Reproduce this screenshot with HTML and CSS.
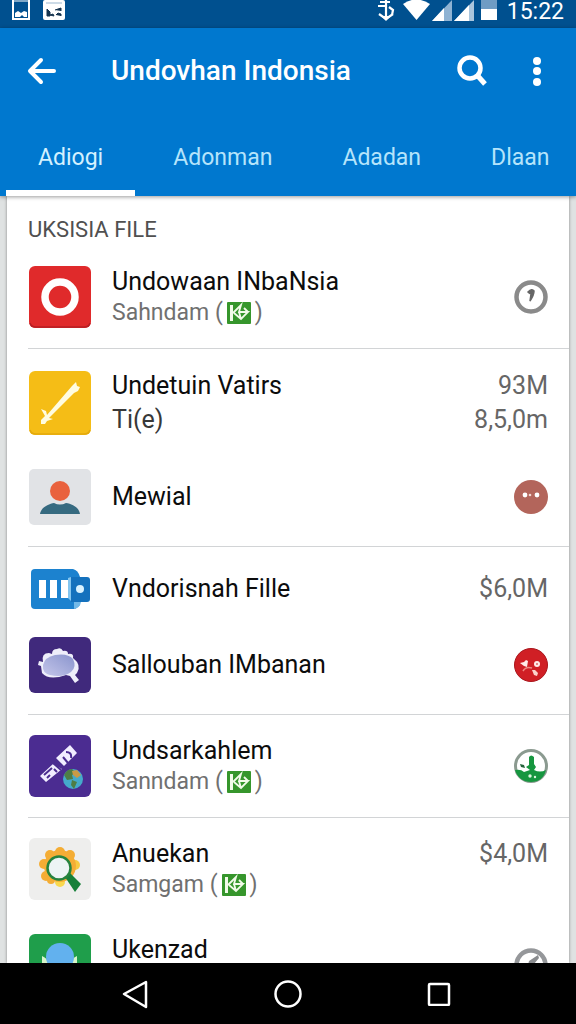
FILE: index.html
```html
<!DOCTYPE html>
<html lang="id">
<head>
    <meta charset="UTF-8">
    <meta name="viewport" content="width=device-width, initial-scale=1.0">
    <title>Undovhan Indonsia</title>
    <link rel="stylesheet" href="styles.css">
</head>
<body>
    <!-- K badge used next to the subtitles -->
    <svg class="defs" width="0" height="0" aria-hidden="true">
        <symbol id="badge" viewBox="0 0 24 22">
            <rect width="24" height="22" rx="1" fill="#36962c"/>
            <path d="M3 3h3v16H3z" fill="#f2fbe9"/>
            <path d="M6 11l8-8-2 7 9 0-7 7-7-6M12 10l2 7M17 6l4 4" fill="none" stroke="#f2fbe9" stroke-width="1.800"/>
        </symbol>
    </svg>

    <div class="status-bar">
        <svg width="18" height="20" viewBox="0 0 18 20">
            <path d="M1 0v19h16V0" fill="none" stroke="#fff" stroke-width="2"/>
            <path d="M1 1h16" stroke="#fff"/>
            <path d="M3 17v-4l3-2 3 2 3-2 3 1v5h-3l-2-2-2 2z" fill="#fff"/>
        </svg>
        <svg class="status-picture" width="22" height="20" viewBox="0 0 22 20">
            <rect width="22" height="20" rx="2" fill="#fff"/>
            <path d="M3 3h16" stroke="#9ab7cf"/>
            <path d="M4 9l3 3v4H4zM7 15l3-1 1 2zM12 10l6-2v3M13 15l2-2 3 1v2" fill="#16344f" stroke="#16344f"/>
        </svg>
        <div class="status-right">
            <svg width="18" height="22" viewBox="0 0 18 22">
                <path d="M9 0v17M3 2h10M1 6h7M2 14l7 5 7-5M12 7l4 3-1 5" fill="none" stroke="#fff" stroke-width="2.200"/>
                <path d="M4 16h10l-5 5z" fill="#fff"/>
            </svg>
            <svg class="wifi" width="27" height="20" viewBox="0 0 27 20">
                <path d="M0 4Q13-5 27 4L13.500 20z" fill="#fff"/>
            </svg>
            <svg width="20" height="21" viewBox="0 0 20 21">
                <path d="M20 0v21H0z" fill="#8fb3d3"/>
                <path d="M12 8v13H0z" fill="#fff"/>
            </svg>
            <svg width="20" height="21" viewBox="0 0 20 21">
                <path d="M20 0v21H0z" fill="#a9c5dd"/>
                <path d="M15 5v16H0z" fill="#fff"/>
            </svg>
            <svg class="battery" width="16" height="20" viewBox="0 0 16 20">
                <path d="M0 0h16v10H0z" fill="#6f9cc4"/>
                <path d="M0 9h16v11H0z" fill="#fff"/>
            </svg>
            <span class="clock">15:22</span>
        </div>
    </div>

    <header>
        <div class="app-bar">
            <button type="button" aria-label="Back">
                <svg width="30" height="28" viewBox="0 0 30 28">
                    <path d="M14 3L3 14l11 11M4 14h23" fill="none" stroke="#fff" stroke-width="4" stroke-linecap="round" stroke-linejoin="round"/>
                </svg>
            </button>
            <h1>Undovhan Indonsia</h1>
            <button type="button" aria-label="Search">
                <svg width="32" height="32" viewBox="0 0 32 32">
                    <circle cx="14" cy="13" r="10.500" fill="none" stroke="#fff" stroke-width="4.500"/>
                    <path d="M21 20l8 9" stroke="#fff" stroke-width="5"/>
                </svg>
            </button>
            <button type="button" class="more" aria-label="More options">
                <svg width="8" height="30" viewBox="0 0 8 30">
                    <circle cx="4" cy="5" r="4" fill="#fff"/>
                    <circle cx="4" cy="15" r="4" fill="#fff"/>
                    <circle cx="4" cy="26" r="4" fill="#fff"/>
                </svg>
            </button>
        </div>
        <nav class="tabs">
            <a href="#" class="active">Adiogi</a>
            <a href="#">Adonman</a>
            <a href="#">Adadan</a>
            <a href="#">Dlaan</a>
        </nav>
    </header>

    <main>
        <h2>UKSISIA FILE</h2>

        <ul>
            <li class="row">
                <svg width="62" height="62" viewBox="0 0 62 62">
                    <rect width="62" height="62" rx="6" fill="#e02a2b"/>
                    <path d="M1 57q1 4 6 4h48q5 0 6-4" fill="none" stroke="#b71f24" stroke-width="1.500"/>
                    <circle cx="31" cy="31" r="15" fill="none" stroke="#fff" stroke-width="7.500"/>
                </svg>
                <div class="text">
                    <p class="title">Undowaan INbaNsia</p>
                    <p class="sub">Sahndam ( <svg width="24" height="22"><use href="#badge"/></svg>)</p>
                </div>
                <svg width="34" height="34" viewBox="0 0 34 34">
                    <circle cx="17" cy="17" r="14.500" fill="#fff" stroke="#8a8a8a" stroke-width="4.500"/>
                    <path d="M14 12q4-4 6-1 0 4-4 10l1-7-2-1z" fill="#666" stroke="#666" stroke-width="1.500"/>
                </svg>
            </li>
        </ul>

        <ul>
            <li class="row">
                <svg width="62" height="64" viewBox="0 0 62 64">
                    <rect width="62" height="64" rx="6" fill="#f5bd16"/>
                    <path d="M1 59q1 4 6 4h48q5 0 6-4" fill="none" stroke="#e3a90d" stroke-width="1.500"/>
                    <path d="M43 15l4-4 1 4 3 1-2 4-4 2-25 25 4 1-6 2-2 3-4 0 0-4 4-4-4-7 5 2 1 4z" fill="#fffce0"/>
                </svg>
                <div class="text two-line">
                    <p class="title">Undetuin Vatirs</p>
                    <p class="second">Ti(e)</p>
                </div>
                <div class="amount two-line">
                    <p>93M</p>
                    <p>8,5,0m</p>
                </div>
            </li>
            <li class="row short">
                <svg width="62" height="56" viewBox="0 0 62 56">
                    <rect width="62" height="56" rx="5" fill="#e1e3e6"/>
                    <path d="M11 45c1-7 9-10 14-11q6 3 12 0c6 1 13 4 14 11z" fill="#366a80"/>
                    <circle cx="31" cy="22" r="10" fill="#e9623e"/>
                </svg>
                <p class="text title">Mewial</p>
                <svg width="34" height="34" viewBox="0 0 34 34">
                    <circle cx="17" cy="17" r="17" fill="#b3655b"/>
                    <circle cx="11" cy="15" r="2.400" fill="#fff"/>
                    <circle cx="16" cy="15" r="1.300" fill="#f3d9d4"/>
                    <circle cx="23" cy="15" r="2.400" fill="#fff"/>
                </svg>
            </li>
        </ul>

        <ul>
            <li class="row short">
                <svg width="62" height="60" viewBox="0 0 62 60">
                    <path d="M6 10h38q5 1 7 8v28l-5 4H6q-4 0-4-4V14q0-4 4-4z" fill="#1c82cf"/>
                    <path d="M45 43h7q-1 6-7 7z" fill="#72b9e8"/>
                    <path d="M42 18h16q3 0 3 3v19q0 3-3 3H42z" fill="#1471bd"/>
                    <path d="M10 21h7v18h-7zM21 21h7v18h-7zM32 21h7v18h-7z" fill="#fff"/>
                    <path d="M39 19l3-1v24l-3-3z" fill="#83c5ef"/>
                    <circle cx="51" cy="30" r="4" fill="#d9f2ff"/>
                </svg>
                <p class="text title">Vndorisnah Fille</p>
                <p class="amount">$6,0M</p>
            </li>
            <li class="row short">
                <svg width="62" height="56" viewBox="0 0 62 56">
                    <defs>
                        <linearGradient id="cloud" x1="0" y1="1" x2="1" y2="0">
                            <stop offset="0" stop-color="#c5c6ea"/>
                            <stop offset="1" stop-color="#8994cd"/>
                        </linearGradient>
                    </defs>
                    <rect width="62" height="56" rx="6" fill="#40297c"/>
                    <path d="M14 25q-2-9 6-9l3 1q0-5 5-5 4-2 6 2 5-1 5 3 6-1 5 4 9 7 4 15l-2 2 4 5-4 3-5-7-4-1q-17 6-24-2l-1-7-3-1 1-4z" fill="#eeeefa"/>
                    <path d="M14 28q2-8 12-10 13-2 18 4 4 8-2 13-8 6-21 3-8-2-7-10z" fill="url(#cloud)"/>
                </svg>
                <p class="text title">Sallouban IMbanan</p>
                <svg width="34" height="34" viewBox="0 0 34 34">
                    <circle cx="17" cy="17" r="16.500" fill="#d01f25" stroke="#a9161c"/>
                    <path d="M6 15l4-1 2-2 2 1-1 6-3-1z" fill="#ffece8"/>
                    <circle cx="23" cy="16" r="3" fill="#ffece8"/>
                    <circle cx="23" cy="16" r="1" fill="#d66"/>
                    <path d="M9 23q3-5 9-3" fill="none" stroke="#ee8880" stroke-width="1.500"/>
                    <path d="M18 22l3 0 3 3-1 3-3-1z" fill="#fbd3cc"/>
                </svg>
            </li>
        </ul>

        <ul>
            <li class="row">
                <svg width="62" height="62" viewBox="0 0 62 62">
                    <rect width="62" height="62" rx="6" fill="#4b2c91"/>
                    <path d="M11 41l13-12 9 5-16 13zM27 23L41 10l7 8-13 13z" fill="#f1edff"/>
                    <path d="M15 40l8-7M18 43l3-3M25 34l3 3M34 22l5 6M37 17q6 0 5 6M24 28l8 7" stroke="#4b2c91" stroke-width="2" fill="none"/>
                    <circle cx="44" cy="44" r="10" fill="#45aacb"/>
                    <path d="M35 40q3-6 8-6l4 4-4 2 1 4-6 1zM43 45l5 2-3 7-3-4z" fill="#4e7d45"/>
                    <path d="M43 36l5-1 4 5-4 3-4-3z" fill="#c99a46"/>
                </svg>
                <div class="text">
                    <p class="title">Undsarkahlem</p>
                    <p class="sub">Sanndam ( <svg width="24" height="22"><use href="#badge"/></svg>)</p>
                </div>
                <svg width="34" height="34" viewBox="0 0 34 34">
                    <circle cx="17" cy="17" r="15.500" fill="#fff" stroke="#8b9a90" stroke-width="3"/>
                    <path d="M1 21q6-1 9 2l6-2-4-3 3-2V8q2-3 5 0v7l2 3-2 3q6 3 12 0-3 12-15 12Q5 33 1 21z" fill="#16963f"/>
                    <path d="M6 15l4 1 1 3-4-1z" fill="#23633a"/>
                    <circle cx="16" cy="27" r="1.700" fill="#dff5df"/>
                    <circle cx="21" cy="28" r="1.200" fill="#dff5df"/>
                </svg>
            </li>
        </ul>

        <ul class="open">
            <li class="row">
                <svg width="62" height="62" viewBox="0 0 62 62">
                    <rect width="62" height="62" rx="6" fill="#eeeeed"/>
                    <g fill="#f4ad35">
                        <circle cx="31" cy="14" r="5"/>
                        <circle cx="21" cy="17" r="5"/>
                        <circle cx="41" cy="17" r="5"/>
                        <circle cx="15" cy="26" r="5"/>
                        <circle cx="46" cy="27" r="5" fill="#f8ca43"/>
                        <circle cx="17" cy="38" r="5"/>
                        <circle cx="31" cy="44" r="5" fill="#f9d84d"/>
                        <circle cx="22" cy="42" r="4"/>
                        <circle cx="31" cy="28" r="16"/>
                    </g>
                    <path d="M36 39l5-4 11 11-6 8z" fill="#168039"/>
                    <circle cx="30" cy="30" r="11.500" fill="#edf4f5" stroke="#26833e" stroke-width="2.500"/>
                </svg>
                <div class="text">
                    <p class="title">Anuekan</p>
                    <p class="sub">Samgam (<svg width="24" height="22"><use href="#badge"/></svg>)</p>
                </div>
                <p class="amount top">$4,0M</p>
            </li>
            <li class="row last">
                <svg width="62" height="62" viewBox="0 0 62 62">
                    <rect width="62" height="62" rx="6" fill="#1f9e4b"/>
                    <path d="M13 22q7 3 9 12h17q2-9 9-12v30H13z" fill="#d8f5c9"/>
                    <circle cx="31" cy="23" r="14" fill="#62b1ee"/>
                </svg>
                <p class="text title">Ukenzad</p>
                <svg width="34" height="34" viewBox="0 0 34 34">
                    <circle cx="17" cy="17" r="14.500" fill="#fff" stroke="#95979a" stroke-width="4.500"/>
                    <path d="M13 21l2-8 9-6 1 3-5 6-5 7z" fill="#8a8c8f"/>
                </svg>
            </li>
        </ul>
    </main>

    <footer>
        <button type="button" aria-label="Back">
            <svg width="28" height="30" viewBox="0 0 28 30">
                <path d="M25 3v25L3 15z" fill="none" stroke="#fff" stroke-width="2.500" stroke-linejoin="round"/>
            </svg>
        </button>
        <button type="button" aria-label="Home">
            <svg width="28" height="28" viewBox="0 0 28 28">
                <circle cx="14" cy="14" r="12.500" fill="none" stroke="#fff" stroke-width="2.500"/>
            </svg>
        </button>
        <button type="button" aria-label="Recent apps">
            <svg width="24" height="24" viewBox="0 0 24 24">
                <rect x="2" y="2" width="20" height="21" rx="1" fill="none" stroke="#fff" stroke-width="2.500"/>
            </svg>
        </button>
    </footer>
</body>
</html>
```
FILE: styles.css
```css
* {
    box-sizing: border-box;
}

body {
    display: flex;
    flex-direction: column;
    height: 100vh;
    margin: 0;
    overflow: hidden;
    font-family: Roboto, "Liberation Sans", sans-serif;
    background-color: #dfe2e2;
    color: #0c0c0c;
}

h1, h2, p, ul {
    margin: 0;
    padding: 0;
}

svg {
    display: block;
    flex: none;
}

button {
    display: flex;
    padding: 0;
    border: none;
    background: none;
    cursor: pointer;
}

.defs {
    position: absolute;
}

/* Status bar */
.status-bar {
    display: flex;
    flex: none;
    height: 28px;
    padding: 0 12px;
    background-color: #00508f;
    color: white;
}

.status-picture {
    margin-left: 13px;
}

.status-right {
    display: flex;
    gap: 2px;
    margin-left: auto;
}

.wifi {
    margin-left: 6px;
}

.battery {
    margin: 0 8px 0 5px;
}

.clock {
    font-size: 23px;
    line-height: 28px;
    height: 28px;
    margin-top: -2px;
}

/* Header */
header {
    flex: none;
    background-color: #0078cf;
    color: white;
    box-shadow: 0 1px 4px rgba(0, 0, 0, 0.4);
    z-index: 1;
}

.app-bar {
    display: flex;
    align-items: center;
    height: 86px;
    padding: 0 35px 0 27px;
}

h1 {
    flex: 1;
    margin-left: 54px;
    font-size: 28px;
    font-weight: 500;
    line-height: 32px;
}

.more {
    margin-left: 45px;
}

.tabs {
    display: flex;
    gap: 6px;
    height: 82px;
    padding-left: 6px;
    overflow: hidden;
}

.tabs a {
    flex: none;
    padding: 29px 32px 0;
    border-bottom: 6px solid transparent;
    font-size: 23px;
    line-height: 30px;
    color: #b5e4fb;
    text-decoration: none;
}

.tabs .active {
    border-color: white;
    color: #d3f1ff;
}

/* List */
main {
    flex: 1;
    min-height: 0;
    margin: 0 7px;
    padding-left: 21px;
    overflow: hidden;
    background-color: white;
    box-shadow: 0 0 3px rgba(0, 0, 0, 0.4);
}

h2 {
    padding: 20px 0 2px;
    font-size: 22px;
    font-weight: 400;
    line-height: 28px;
    color: #505050;
}

ul {
    list-style: none;
    border-bottom: 1px solid #d2d4d6;
}

ul:has(.short) {
    padding-bottom: 15px;
}

ul.open {
    border-bottom: none;
}

.row {
    display: flex;
    align-items: center;
    gap: 21px;
    padding: 20px 21px 20px 1px;
}

.row.short {
    padding-top: 12px;
    padding-bottom: 6px;
}

.row.last {
    padding-top: 14px;
}

.row.last .title {
    align-self: flex-start;
}

.text {
    flex: 1;
}

.title {
    font-size: 25px;
    line-height: 32px;
}

.sub {
    display: flex;
    align-items: center;
    gap: 4px;
    font-size: 23px;
    line-height: 30px;
    color: #707070;
}

.second {
    font-size: 25px;
    color: #383838;
}

.amount {
    font-size: 25px;
    line-height: 32px;
    text-align: right;
    color: #666;
}

.amount.top {
    align-self: flex-start;
}

.two-line p {
    line-height: 34px;
}

/* Navigation bar */
footer {
    display: flex;
    flex: none;
    justify-content: center;
    gap: 125px;
    align-items: center;
    height: 61px;
    padding-right: 5px;
    background-color: black;
    z-index: 1;
}
```
